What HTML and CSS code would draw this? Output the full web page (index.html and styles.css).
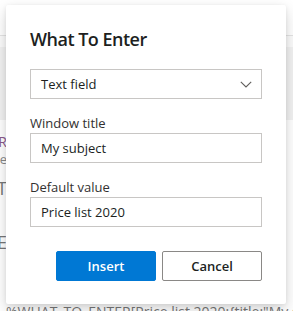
FILE: index.html
```html
<!DOCTYPE html>
<html>
<head>
<meta charset="utf-8">
<link rel="stylesheet" href="styles.css">
</head>
<body>
<div class="page">
  <div class="topbar"></div>
  <div class="subbar"></div>
  <div class="grayband"></div>
  <div class="frags">
    <div class="frag frag-r"><span>R</span></div>
    <div class="frag frag-he"><span>he</span></div>
    <div class="frag frag-t"><span>T</span></div>
    <div class="frag frag-e"><span>E</span></div>
  </div>
  <div class="codeline">%WHAT_TO_ENTER[Price list 2020;{title:"My su</div>
</div>

<div class="dialog" role="dialog">
  <h1 class="title">What To Enter</h1>
  <div class="select">
    <span>Text field</span>
    <svg class="chev" width="12" height="7" viewBox="0 0 12 7"><path d="M0.8 0.8 L6 6 L11.2 0.8" fill="none" stroke="#605e5c" stroke-width="1.1"/></svg>
  </div>
  <label class="label">Window title</label>
  <div class="input">My subject</div>
  <label class="label">Default value</label>
  <div class="input">Price list 2020</div>
  <div class="actions">
    <button class="btn btn-primary">Insert</button>
    <button class="btn btn-default">Cancel</button>
  </div>
</div>
</body>
</html>
```
FILE: styles.css
```css
html, body {
  margin: 0;
  padding: 0;
  background: #ffffff;
  width: 293px;
  height: 311px;
  overflow: hidden;
  font-family: "Open Sans", "Noto Sans", sans-serif;
  color: #323130;
}

.page {
  display: flex;
  flex-direction: column;
}

.topbar {
  height: 35px;
  border-bottom: 1px solid #e4e4e4;
  background: #ffffff;
}

.subbar {
  height: 11px;
  background: #fbfbfb;
}

.grayband {
  height: 73px;
  background: #f2f2f2;
}

.frags {
  display: flex;
  flex-direction: column;
}

.frag {
  width: 7px;
  display: flex;
  justify-content: flex-end;
  white-space: nowrap;
}

.frag-r {
  margin-top: 13px;
  font-size: 14px;
  line-height: 18px;
  color: #8c5a8c;
}

.frag-he {
  font-size: 13px;
  line-height: 16px;
  color: #888;
}

.frag-t {
  margin-top: 10px;
  font-size: 18px;
  line-height: 22px;
  color: #777;
}

.frag-e {
  margin-top: 32px;
  font-size: 18px;
  line-height: 22px;
  color: #777;
}

.codeline {
  margin-top: 50px;
  padding-left: 6px;
  font-size: 14px;
  line-height: 18px;
  color: #777;
  white-space: nowrap;
}

.dialog {
  position: absolute;
  left: 6px;
  top: 5px;
  width: 280px;
  box-sizing: border-box;
  padding: 20px 24px 23px;
  background: #ffffff;
  border-radius: 2px;
  box-shadow: 0 6px 16px rgba(0,0,0,0.16), 0 1px 4px rgba(0,0,0,0.08);
  display: flex;
  flex-direction: column;
}

.title {
  margin: 0;
  font-size: 18px;
  letter-spacing: -0.5px;
  line-height: 28px;
  font-weight: 600;
  color: #201f1e;
}

.select, .input {
  height: 30px;
  box-sizing: border-box;
  border: 1px solid #c8c6c4;
  font-size: 13px;
  display: flex;
  align-items: center;
  padding: 0 10px;
  color: #201f1e;
}

.select {
  margin-top: 16px;
  justify-content: space-between;
}

.chev {
  margin-right: -1px;
}

.label {
  margin-top: 14px;
  font-size: 13px;
  line-height: 20px;
  color: #323130;
}

.actions {
  margin-top: 24px;
  display: flex;
  justify-content: flex-end;
  gap: 6px;
}

.btn {
  width: 100px;
  height: 30px;
  box-sizing: border-box;
  font-family: inherit;
  font-size: 13px;
  font-weight: 600;
  border-radius: 2px;
  padding: 0;
}

.btn-primary {
  background: #0078d4;
  border: 1px solid #0078d4;
  color: #ffffff;
}

.btn-default {
  background: #ffffff;
  border: 1px solid #8a8886;
  color: #201f1e;
}
```
